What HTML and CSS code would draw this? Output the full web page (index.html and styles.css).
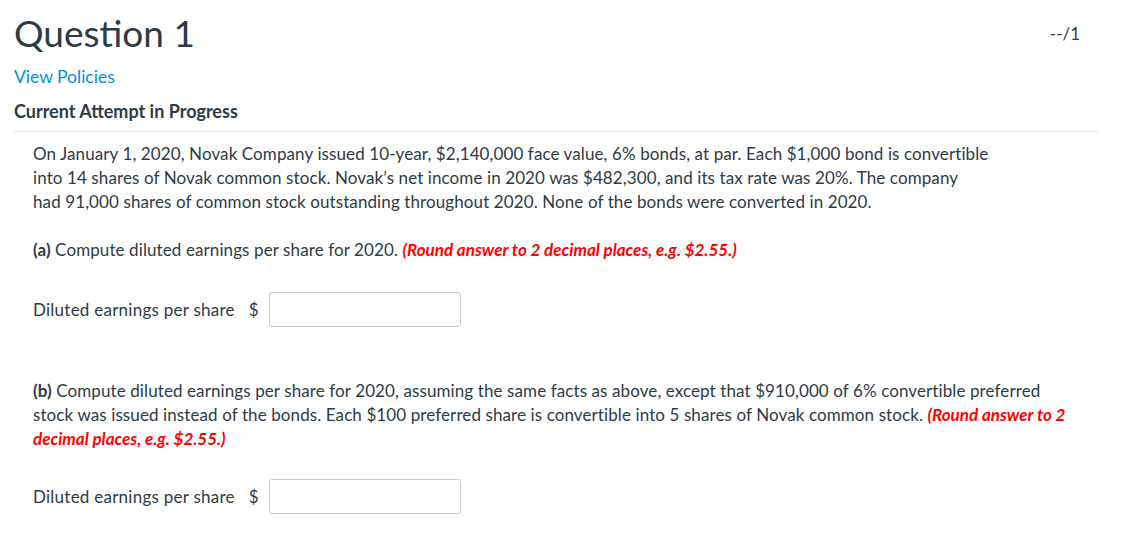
FILE: index.html
```html
<!DOCTYPE html>
<html lang="en">

<head>
    <meta charset="UTF-8">
    <meta name="viewport" content="width=device-width, initial-scale=1.0">
    <title>Question 1</title>
    <link rel="stylesheet" href="styles.css">
</head>

<body>
    <div class="wrap">
        <div class="head">
            <div class="title_row">
                <h1>Question 1</h1>
                <span class="score">--/1</span>
            </div>
            <a href="#" class="policies">View Policies</a>
            <p class="attempt">Current Attempt in Progress</p>
        </div>

        <div class="question">
            <p>
                On January 1, 2020, Novak Company issued 10-year, $2,140,000 face value, 6% bonds, at par. Each $1,000 bond is convertible<br>
                into 14 shares of Novak common stock. Novak’s net income in 2020 was $482,300, and its tax rate was 20%. The company<br>
                had 91,000 shares of common stock outstanding throughout 2020. None of the bonds were converted in 2020.
            </p>

            <p>
                <b>(a)</b> Compute diluted earnings per share for 2020. <span class="hint">(Round answer to 2 decimal places, e.g. $2.55.)</span>
            </p>

            <div class="answer">
                <label>Diluted earnings per share</label>
                <span class="unit">$</span>
                <input type="text">
            </div>

            <p class="part_b">
                <b>(b)</b> Compute diluted earnings per share for 2020, assuming the same facts as above, except that $910,000 of 6% convertible preferred<br>
                stock was issued instead of the bonds. Each $100 preferred share is convertible into 5 shares of Novak common stock. <span class="hint">(Round answer to 2<br>
                decimal places, e.g. $2.55.)</span>
            </p>

            <div class="answer">
                <label>Diluted earnings per share</label>
                <span class="unit">$</span>
                <input type="text">
            </div>
        </div>
    </div>
</body>

</html>
```

FILE: styles.css
```css
body {
    margin: 0;
    font-family: Lato, "Open Sans", sans-serif;
    color: #2d3b45;
    background: #fff;
}

.wrap {
    width: 1084px;
    padding: 11px 0 0 14px;
}

.head {
    border-bottom: 1px solid #e6e6e6;
    padding-bottom: 8px;
}

.title_row {
    display: flex;
    justify-content: space-between;
    align-items: flex-start;
}

h1 {
    margin: 0;
    font-size: 37px;
    font-weight: normal;
    line-height: 44px;
}

.score {
    margin: 11px 18px 0 0;
    font-size: 17px;
    line-height: 24px;
}

.policies {
    display: block;
    margin-top: 10px;
    color: #008ee2;
    text-decoration: none;
    font-size: 17.5px;
    line-height: 24px;
}

.attempt {
    margin: 10px 0 0;
    font-size: 18px;
    font-weight: bold;
    line-height: 24px;
}

.question {
    padding: 10px 0 0 19px;
    font-size: 17px;
    letter-spacing: 0.1px;
    line-height: 24px;
}

.question p {
    margin: 0 0 24px;
}

.hint {
    color: #f00;
    font-style: italic;
    font-weight: bold;
    letter-spacing: 0;
}

.answer {
    display: flex;
    align-items: center;
    margin: 30px 0 0;
}

.answer label {
    letter-spacing: 0.25px;
}

.unit {
    margin-left: 14px;
}

.answer input {
    width: 192px;
    height: 35px;
    box-sizing: border-box;
    margin-left: 10px;
    border: 1px solid #c7cdd1;
    border-radius: 3px;
    font-family: inherit;
    font-size: 16px;
}

.question .part_b {
    margin: 52px 0 28px;
}

.part_b + .answer {
    margin-top: 0;
}
```
